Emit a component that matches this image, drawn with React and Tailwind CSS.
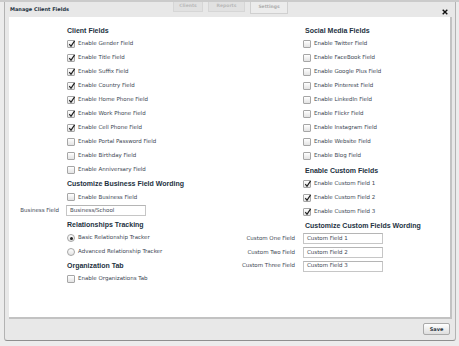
import React from "react";

const LABEL = "font-['DejaVu_Sans',Verdana,sans-serif] text-[5.5px] text-[#3b4652] whitespace-nowrap leading-none";
const HEAD = "font-['Liberation_Sans',Arial,sans-serif] font-bold text-[7px] text-[#24323f] whitespace-nowrap leading-none";

function Box({ checked }) {
  return (
    <span className="relative w-[8px] h-[8px] shrink-0 border border-[#a6a6a6] rounded-[1px] bg-gradient-to-b from-white to-[#e3e3e3]">
      {checked && (
        <svg className="absolute left-[0px] top-[-1px]" width="8" height="8" viewBox="0 0 8 8">
          <path d="M1.3 4.2 L3 6.3 L6.6 0.8" stroke="#1e1e1e" strokeWidth="1.2" fill="none" />
        </svg>
      )}
    </span>
  );
}

function Radio({ checked }) {
  return (
    <span className="w-[8px] h-[8px] shrink-0 rounded-full border border-[#a6a6a6] bg-gradient-to-b from-white to-[#e3e3e3] flex items-center justify-center">
      {checked && <span className="w-[3px] h-[3px] rounded-full bg-[#222]" />}
    </span>
  );
}

function Row({ lw, label, children, h = "h-[14px]" }) {
  return (
    <div className={`flex items-center ${h}`}>
      <div className={`${lw} shrink-0 text-right pr-[8px] ${LABEL}`}>{label}</div>
      {children}
    </div>
  );
}

function Check({ lw, text, checked, h }) {
  return (
    <Row lw={lw} h={h}>
      <div className="flex items-center gap-[3px]">
        <Box checked={checked} />
        <span className={LABEL}>{text}</span>
      </div>
    </Row>
  );
}

function Head({ lw, text, h, pl = "" }) {
  return (
    <Row lw={lw} h={h}>
      <span className={`${HEAD} ${pl}`}>{text}</span>
    </Row>
  );
}

function Field({ lw, label, value, h, ml = "" }) {
  return (
    <Row lw={lw} label={label} h={h}>
      <div className={`w-[80px] h-[11px] border border-[#c6c6c6] border-t-[#b5b5b5] bg-white flex items-center pl-[3px] ${ml} ${LABEL}`}>
        {value}
      </div>
    </Row>
  );
}

export default function App() {
  const L = "w-[58px]";
  const R = "w-[65px]";
  const s = "h-[13.6px]";
  return (
    <div className="w-[459px] h-[346px] bg-[#ececec] overflow-hidden">
      <div className="h-[2px] bg-[#cbcbcb]" />
      <div className="ml-[4px] w-[452px] h-[339px] bg-[#e8e8e8] border-l border-r border-b border-[#b3b3b3] border-b-[#8f8f8f] rounded-b-[3px]">
        <div className="h-[15px] flex items-start">
          <div className="w-[168px] pl-[5px] pt-[5px] font-['DejaVu_Sans',Verdana,sans-serif] font-bold text-[5px] text-[#24323f] leading-none whitespace-nowrap">
            Manage Client Fields
          </div>
          <div className="flex gap-[5px]">
            <div className="w-[30px] h-[10px] border border-t-0 border-[#d6d6d6] bg-[#e1e1e1] flex items-center justify-center font-['DejaVu_Sans',Verdana,sans-serif] font-bold text-[4.5px] text-[#b9b9b9]">Clients</div>
            <div className="w-[37px] h-[10px] border border-t-0 border-[#d6d6d6] bg-[#e1e1e1] flex items-center justify-center font-['DejaVu_Sans',Verdana,sans-serif] font-bold text-[4.5px] text-[#b9b9b9]">Reports</div>
            <div className="w-[38px] h-[12px] border border-t-0 border-[#d0d0d0] bg-[#ececec] flex items-center justify-center font-['DejaVu_Sans',Verdana,sans-serif] font-bold text-[4.5px] text-[#adadad]">Settings</div>
          </div>
          <div className="ml-auto mr-[7px] mt-[7px]">
            <svg width="6" height="6" viewBox="0 0 6 6">
              <path d="M0.7 0.7 L5.3 5.3 M5.3 0.7 L0.7 5.3" stroke="#111" strokeWidth="1.4" />
            </svg>
          </div>
        </div>
        <div className="ml-[4px] w-[443px] h-[302px] bg-white border-r-2 border-b-2 border-[#c2c2c2] pt-[6px] flex">
          <div className="w-[229px] flex flex-col">
            <Head lw={L} text="Client Fields" />
            <Check lw={L} checked text="Enable Gender Field" />
            <Check lw={L} checked text="Enable Title Field" />
            <Check lw={L} checked text="Enable Suffix Field" />
            <Check lw={L} checked text="Enable Country Field" />
            <Check lw={L} checked text="Enable Home Phone Field" />
            <Check lw={L} checked text="Enable Work Phone Field" />
            <Check lw={L} checked text="Enable Cell Phone Field" />
            <Check lw={L} text="Enable Portal Password Field" />
            <Check lw={L} text="Enable Birthday Field" />
            <Check lw={L} text="Enable Anniversary Field" />
            <Head lw={L} h={s} text="Customize Business Field Wording" />
            <Check lw={L} h={s} text="Enable Business Field" />
            <Field lw={L} h={s} label="Business Field" value="Business/School" ml="ml-[-1px]" />
            <Head lw={L} h={s} text="Relationships Tracking" />
            <Row lw={L} h={s}>
              <div className="flex items-center gap-[3px]">
                <Radio checked />
                <span className={LABEL}>Basic Relationship Tracker</span>
              </div>
            </Row>
            <Row lw={L} h={s}>
              <div className="flex items-center gap-[3px]">
                <Radio />
                <span className={LABEL}>Advanced Relationship Tracker</span>
              </div>
            </Row>
            <Head lw={L} h={s} text="Organization Tab" />
            <Check lw={L} h={s} text="Enable Organizations Tab" />
          </div>
          <div className="flex-1 flex flex-col">
            <Head lw={R} pl="pl-[2px]" text="Social Media Fields" />
            <Check lw={R} text="Enable Twitter Field" />
            <Check lw={R} text="Enable FaceBook Field" />
            <Check lw={R} text="Enable Google Plus Field" />
            <Check lw={R} text="Enable Pinterest Field" />
            <Check lw={R} text="Enable LinkedIn Field" />
            <Check lw={R} text="Enable Flickr Field" />
            <Check lw={R} text="Enable Instagram Field" />
            <Check lw={R} text="Enable Website Field" />
            <Check lw={R} text="Enable Blog Field" />
            <Head lw={R} pl="pl-[2px]" text="Enable Custom Fields" />
            <Check lw={R} checked text="Enable Custom Field 1" />
            <Check lw={R} checked text="Enable Custom Field 2" />
            <Check lw={R} h={s} checked text="Enable Custom Field 3" />
            <Head lw={R} h={s} pl="pl-[2px]" text="Customize Custom Fields Wording" />
            <Field lw={R} h={s} label="Custom One Field" value="Custom Field 1" />
            <Field lw={R} h={s} label="Custom Two Field" value="Custom Field 2" />
            <Field lw={R} h={s} label="Custom Three Field" value="Custom Field 3" />
          </div>
        </div>
        <div className="flex justify-end pr-[5px] pt-[4px]">
          <div className="w-[27px] h-[12px] border border-[#a9a9a9] rounded-[2px] bg-gradient-to-b from-white to-[#dedede] flex items-center justify-center font-['DejaVu_Sans',Verdana,sans-serif] font-bold text-[5px] text-[#2a3440] leading-none">
            Save
          </div>
        </div>
      </div>
    </div>
  );
}
